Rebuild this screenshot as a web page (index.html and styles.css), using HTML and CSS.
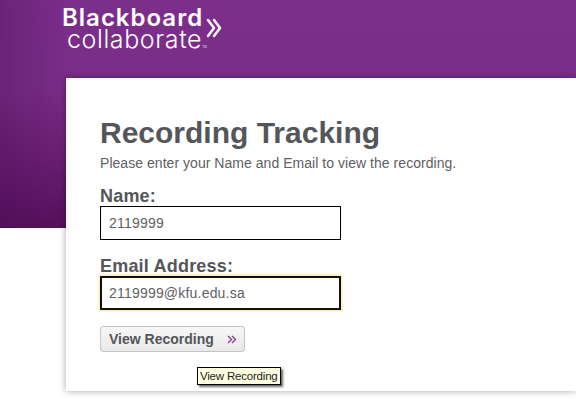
FILE: index.html
```html
<!DOCTYPE html>
<html lang="en">
<head>
    <meta charset="UTF-8">
    <meta name="viewport" content="width=device-width, initial-scale=1.0">
    <title>Recording Tracking</title>
    <link rel="stylesheet" href="styles.css">
</head>
<body>

    <div class="banner">
        <div class="logo">
            <div class="logo-text">
                <span class="logo-top">Blackboard</span>
                <span class="logo-bottom">collaborate<small>TM</small></span>
            </div>
            <svg class="logo-mark" width="16" height="20" viewBox="0 0 16 20">
                <path d="M2 2 L8 10 L2 18" fill="none" stroke="#f6eef8" stroke-width="2.6" stroke-linecap="round" stroke-linejoin="round"/>
                <path d="M8 2 L14 10 L8 18" fill="none" stroke="#f6eef8" stroke-width="2.6" stroke-linecap="round" stroke-linejoin="round"/>
            </svg>
        </div>
    </div>

    <div class="wrapper">
        <form action="">
            <h1>Recording Tracking</h1>
            <p class="intro">Please enter your Name and Email to view the recording.</p>
            <div class="input-box">
                <label for="username">Name:</label>
                <input type="text" id="username" value="2119999">
            </div>
            <div class="input-box">
                <label for="email">Email Address:</label>
                <input type="text" id="email" class="focused" value="2119999@kfu.edu.sa">
            </div>
            <div class="btn-row">
                <button type="button" class="btn">
                    <span>View Recording</span>
                    <svg width="10" height="9" viewBox="0 0 10 9">
                        <path d="M1 1 L4.5 4.5 L1 8 M5 1 L8.5 4.5 L5 8" fill="none" stroke="#8a3f96" stroke-width="1.4"/>
                    </svg>
                </button>
                <div class="tip">View Recording</div>
            </div>
        </form>
    </div>

</body>
</html>
```

FILE: styles.css
```css
*{
    margin: 0;
    padding: 0;
    box-sizing: border-box;
}
html,body{
    height: 100%;
}
body{
    background-color: #fff;
    font-family: "Liberation Sans", Arial, sans-serif;
    color: #54565a;
    overflow: hidden;
}
.banner{
    height: 228px;
    padding: 7px 0 0 62px;
    background:
        linear-gradient(90deg, rgba(70,10,80,.3) 0, rgba(70,10,80,0) 70px),
        linear-gradient(180deg, #7b2e8a 0, #7a2d88 90px, #6a1e73 160px, #56105c 228px);
}
.logo{
    display: flex;
    align-items: flex-start;
}
.logo-text{
    display: flex;
    flex-direction: column;
    color: #fff;
    font-family: Inter, sans-serif;
    line-height: 22px;
}
.logo-top{
    font-size: 24px;
    font-weight: 600;
    letter-spacing: 1px;
}
.logo-bottom{
    font-size: 25px;
    font-weight: 300;
    margin: -1px 0 0 5px;
    letter-spacing: .6px;
    white-space: nowrap;
}
.logo-bottom small{
    font-size: 3px;
    letter-spacing: 0;
}
.logo-mark{
    margin: 11px 0 0 -1px;
}
.wrapper{
    position: absolute;
    top: 78px;
    left: 66px;
    width: 510px;
    height: 313px;
    background-color: #fff;
    box-shadow: 0 0 7px rgba(0,0,0,.35);
    padding: 38px 34px;
}
.wrapper h1{
    font-size: 30px;
    line-height: 34px;
    font-weight: 700;
}
.intro{
    font-size: 14px;
    line-height: 16px;
    margin-top: 5px;
    color: #5f6064;
    letter-spacing: .04px;
}
.input-box{
    margin-top: 15px;
}
.input-box + .input-box{
    margin-top: 16px;
}
.input-box label{
    display: block;
    font-size: 18px;
    font-weight: 700;
    line-height: 20px;
    letter-spacing: .2px;
}
.input-box input{
    display: block;
    width: 241px;
    height: 34px;
    border: 1px solid #000;
    outline: none;
    padding: 0 8px;
    font-family: inherit;
    font-size: 14px;
    letter-spacing: .2px;
    color: #5f6064;
    background-color: #fff;
}
.input-box input.focused{
    border: 2px solid #111;
    padding: 0 7px;
    box-shadow: 0 0 2px 1px #fde58a;
}
.btn-row{
    position: relative;
    margin-top: 16px;
}
.btn{
    display: flex;
    align-items: center;
    justify-content: space-between;
    width: 145px;
    height: 26px;
    padding: 0 7px 0 8px;
    border: 1px solid #c4c4c4;
    border-radius: 3px;
    background: linear-gradient(180deg, #f7f7f7, #e9e9e9);
    font-family: inherit;
    font-size: 14px;
    font-weight: 700;
    color: #54565a;
    cursor: pointer;
}
.tip{
    position: absolute;
    top: 41px;
    left: 97px;
    height: 18px;
    padding: 0 2px;
    border: 1px solid #000;
    background-color: #ffffe1;
    box-shadow: 2px 2px 2px rgba(0,0,0,.6);
    font-size: 11.5px;
    line-height: 16px;
    letter-spacing: -.2px;
    color: #222;
    white-space: nowrap;
}
```
